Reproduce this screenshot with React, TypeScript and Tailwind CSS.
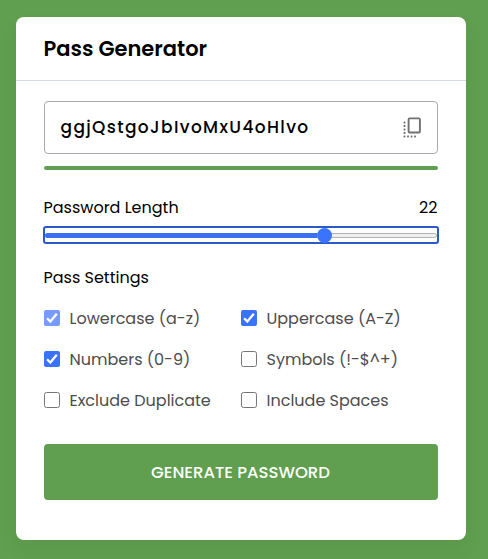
const settings = [
  { label: 'Lowercase (a-z)', checked: true, dim: true },
  { label: 'Uppercase (A-Z)', checked: true, dim: false },
  { label: 'Numbers (0-9)', checked: true, dim: false },
  { label: 'Symbols (!-$^+)', checked: false, dim: false },
  { label: 'Exclude Duplicate', checked: false, dim: false },
  { label: 'Include Spaces', checked: false, dim: false },
];

const dots = [
  [4.5, 6.5], [4.5, 10], [4.5, 13.5], [4.5, 17], [4.5, 20.5],
  [8, 20.5], [11.5, 20.5], [15, 20.5],
];

function CopyIcon() {
  return (
    <svg className="size-6 shrink-0 text-[#707070]" viewBox="0 0 24 24" fill="none">
      <rect x="8.6" y="2.4" width="11.3" height="14.1" rx="1" stroke="currentColor" strokeWidth="1.9" />
      {dots.map(([x, y]) => (
        <rect key={`${x}-${y}`} x={x - 0.9} y={y - 0.9} width="1.8" height="1.8" rx="0.3" fill="currentColor" />
      ))}
    </svg>
  );
}

function Slider() {
  return (
    <div className="-mx-px flex h-[18px] items-center rounded-[3px] border-2 border-[#2a59c8]">
      <div className="flex h-[5px] flex-1 items-center rounded-full border border-[#b2b2b2] bg-[#efefef]">
        <div className="-ml-px h-[5px] w-[272px] shrink-0 rounded-l-full bg-[#3b70f4]" />
        <div className="size-[15px] shrink-0 rounded-full bg-[#3b74fc]" />
      </div>
    </div>
  );
}

function Checkbox({ checked, dim }: { checked: boolean; dim: boolean }) {
  if (!checked) {
    return <span className="size-4 shrink-0 rounded-[2.5px] border border-[#767676] bg-white" />;
  }
  return (
    <span className={`size-4 shrink-0 rounded-[2px] ${dim ? 'bg-[#769bfc]' : 'bg-[#3a72fb]'}`}>
      <svg viewBox="0 0 16 16" className="size-4" fill="none">
        <path d="M3.1 8.3L6.3 11.5L12.8 3.7" stroke="white" strokeWidth="2.3" />
      </svg>
    </span>
  );
}

export default function App() {
  return (
    <div className="h-[559px] w-[488px] overflow-hidden bg-[#5f9f4f] px-4 pt-[17px] font-['Poppins','Inter',sans-serif] text-base text-black">
      <main className="h-[523px] w-[450px] rounded-lg bg-white shadow-[0_10px_20px_rgba(0,0,0,0.05)]">
        <h2 className="flex h-16 items-center border-b border-[#d4dbe5] px-[27.5px] text-[21px] font-semibold">
          Pass Generator
        </h2>
        <div className="px-7 pt-5">
          <div className="flex h-[53px] items-center justify-between rounded-[4px] border border-[#aaaaaa] pr-[13px] pl-[15.5px]">
            <span className="text-[17px] font-medium tracking-[1.36px]">ggjQstgoJbIvoMxU4oHlvo</span>
            <CopyIcon />
          </div>
          <div className="mt-3 h-1 rounded-full bg-[#5f9f4f]" />
          <div className="mt-[26px] -ml-[0.5px] flex h-6 justify-between pr-[0.5px]">
            <span>Password Length</span>
            <span>22</span>
          </div>
          <div className="mt-1.5">
            <Slider />
          </div>
          <p className="mt-[22px] -ml-[0.5px] h-6">Pass Settings</p>
          <ul className="mt-4 grid grid-cols-2 gap-y-[17px] text-[#4d4d4d]">
            {settings.map((s) => (
              <li key={s.label} className="flex h-6 items-center gap-[9.5px] whitespace-nowrap">
                <Checkbox checked={s.checked} dim={s.dim} />
                <span className="pt-0.5">{s.label}</span>
              </li>
            ))}
          </ul>
          <button className="mt-8 h-14 w-full rounded-[4px] bg-[#5f9f4f] pt-0.5 pr-px text-[16.5px] font-medium text-white">
            GENERATE PASSWORD
          </button>
        </div>
      </main>
    </div>
  );
}
